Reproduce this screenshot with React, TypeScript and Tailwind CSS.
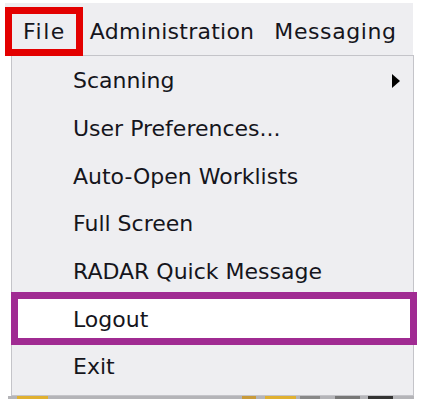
import React from "react";

const items = [
  "Scanning",
  "User Preferences...",
  "Auto-Open Worklists",
  "Full Screen",
  "RADAR Quick Message",
  "Logout",
  "Exit",
];

const MenuItem = ({ label }: { label: string }) => {
  const isLogout = label === "Logout";
  return (
    <div
      className={`relative flex h-[47.67px] items-center pl-[61px] pr-[13px] ${
        isLogout ? "bg-white" : ""
      }`}
    >
      <span className="text-[22px] text-[#15151c]">{label}</span>
      {label === "Scanning" && (
        <svg className="ml-auto" width="8" height="14" viewBox="0 0 8 14">
          <polygon points="0,0 8,7 0,14" fill="#000" />
        </svg>
      )}
      {isLogout && (
        <span className="pointer-events-none absolute -left-[1px] -right-[4px] -top-[3px] -bottom-[2px] border-[7px] border-[#a02b92]" />
      )}
    </div>
  );
};

export default function App() {
  return (
    <div
      className="relative h-[400px] w-[422px] overflow-hidden bg-white"
      style={{ fontFamily: '"DejaVu Sans", Verdana, sans-serif' }}
    >
      {/* menu bar */}
      <div className="relative ml-[5px] mt-[3px] flex h-[52px] w-[408px] items-center bg-[#eeeef1] pt-[5px] text-[22px] tracking-[0.25px] text-[#15151c]">
        <span className="ml-[18px] tracking-[1.5px]">File</span>
        <span className="ml-[24px]">Administration</span>
        <span className="ml-[20px] tracking-[0.6px]">Messaging</span>
        <span className="absolute left-0 top-[4px] h-[49px] w-[78px] border-[7px] border-[#e30000]" />
      </div>

      {/* dropdown */}
      <div className="ml-[11px] w-[403px] border border-[#c4c4c9] bg-[#eeeef1] pt-[1px]">
        {items.map((label) => (
          <MenuItem key={label} label={label} />
        ))}
        <div className="h-[4px]" />
      </div>

      {/* background app peeking below */}
      <div className="ml-[8px] flex h-[3px] w-[406px] bg-[#b4b4b8]">
        <div className="ml-[9px] w-[31px] bg-[#e0b030]" />
        <div className="ml-[194px] w-[14px] bg-[#c89a3a]" />
        <div className="ml-[9px] w-[31px] bg-[#e0b030]" />
        <div className="ml-[4px] w-[20px] bg-[#888]" />
        <div className="ml-[15px] w-[25px] bg-[#777]" />
        <div className="ml-[8px] w-[25px] bg-[#333]" />
      </div>
    </div>
  );
}
